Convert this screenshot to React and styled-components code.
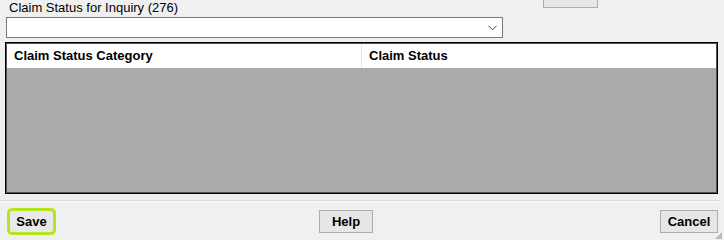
import React from "react";
import styled, { createGlobalStyle } from "styled-components";

const Global = createGlobalStyle`
  html, body { margin: 0; padding: 0; background: #f0f0f0; }
  body { font-family: "Liberation Sans", Arial, sans-serif; font-size: 13px; color: #000; }
`;

const Dialog = styled.div`
  position: relative;
  width: 724px;
  height: 240px;
  background: #f0f0f0;
  overflow: hidden;
  display: flex;
  flex-direction: column;
`;

const TopRow = styled.div`
  display: flex;
  height: 17px;
`;

const Label = styled.div`
  width: 543px;
  box-sizing: border-box;
  padding-left: 9px;
  line-height: 16px;
  white-space: nowrap;
`;

const ClippedButton = styled.div`
  width: 55px;
  height: 22px;
  margin-top: -14px;
  box-sizing: border-box;
  border: 1px solid #adadad;
  background: #e6e6e6;
`;

const Select = styled.div`
  margin-left: 6px;
  width: 497px;
  height: 21px;
  box-sizing: border-box;
  border: 1px solid #7a7a7a;
  background: #fff;
  display: flex;
  align-items: center;
  justify-content: flex-end;
  padding-right: 5px;
`;

const Grid = styled.div`
  margin-top: 4px;
  margin-left: 5px;
  width: 713px;
  height: 152px;
  box-sizing: border-box;
  border: 1px solid #000;
  box-shadow: inset 1px 1px 0 #555, inset -1px -1px 0 #555;
  background: #ababab;
  padding: 1px;
  display: flex;
  flex-direction: column;
`;

const HeaderRow = styled.div`
  display: flex;
  height: 24px;
  background: #fff;
`;

const HeaderCell = styled.div`
  width: ${p => p.$w};
  flex: ${p => (p.$grow ? 1 : "none")};
  box-sizing: border-box;
  padding-left: 7px;
  font-weight: bold;
  line-height: 24px;
  border-right: ${p => (p.$grow ? "none" : "1px solid #e5e5e5")};
`;

const Separator = styled.div`
  margin-top: 6px;
  height: 1px;
  width: 720px;
  background: #dadada;
  border-bottom: 1px solid #fbfbfb;
`;

const ButtonRow = styled.div`
  display: flex;
  align-items: flex-start;
  padding: 0 6px 0 7px;
  margin-top: 6px;
`;

const Highlight = styled.div`
  width: 49px;
  height: 27px;
  box-sizing: border-box;
  border: 3px solid #b5e61d;
  border-radius: 5px;
  display: flex;
  align-items: center;
  justify-content: center;
  background: #e9e9e9;
`;

const Button = styled.div`
  width: ${p => p.$w}px;
  height: 23px;
  margin-top: 2px;
  margin-left: ${p => p.$ml || "0px"};
  box-sizing: border-box;
  border: 1px solid #adadad;
  background: #e6e6e6;
  font-weight: bold;
  display: flex;
  align-items: center;
  justify-content: center;
`;

const SaveText = styled.span`
  font-weight: bold;
`;

const Grip = styled.svg`
  position: absolute;
  right: 2px;
  bottom: 1px;
`;

export default function App() {
  return (
    <Dialog>
      <Global />
      <TopRow>
        <Label>Claim Status for Inquiry (276)</Label>
        <ClippedButton />
      </TopRow>
      <Select>
        <svg width="9" height="6" viewBox="0 0 9 6">
          <path d="M0.5 0.8 L4.5 4.8 L8.5 0.8" fill="none" stroke="#444" strokeWidth="1" />
        </svg>
      </Select>
      <Grid>
        <HeaderRow>
          <HeaderCell $w="355px">Claim Status Category</HeaderCell>
          <HeaderCell $grow>Claim Status</HeaderCell>
        </HeaderRow>
      </Grid>
      <Separator />
      <ButtonRow>
        <Highlight>
          <SaveText>Save</SaveText>
        </Highlight>
        <Button $w={54} $ml="263px">Help</Button>
        <Button $w={58} $ml="auto">Cancel</Button>
      </ButtonRow>
      <Grip width="6" height="6" viewBox="0 0 6 6">
        <rect x="4" y="0" width="2" height="2" fill="#bcbcbc" />
        <rect x="2" y="2" width="2" height="2" fill="#bcbcbc" />
        <rect x="4" y="2" width="2" height="2" fill="#bcbcbc" />
        <rect x="0" y="4" width="2" height="2" fill="#bcbcbc" />
        <rect x="2" y="4" width="2" height="2" fill="#bcbcbc" />
        <rect x="4" y="4" width="2" height="2" fill="#bcbcbc" />
      </Grip>
    </Dialog>
  );
}
